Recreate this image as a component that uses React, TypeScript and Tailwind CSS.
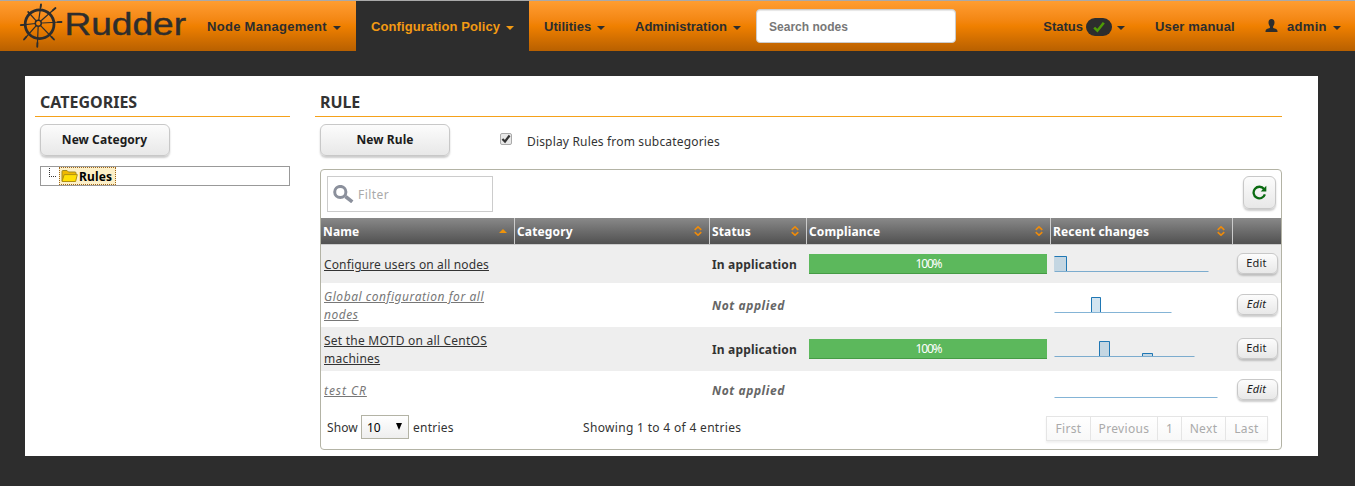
import type { ReactNode } from "react";

const SANS = "font-['Noto_Sans',sans-serif]";
const COLS = "grid grid-cols-[194px_195px_97px_244px_182px_48px]";
const BUTTON =
  "flex items-center justify-center rounded-[6px] border border-[#c8c8c8] bg-linear-to-b from-[#fcfcfc] to-[#e8e8e8] text-[#1c1c1c] shadow-[0_2px_2px_rgba(0,0,0,0.2)]";

type Rule = { name: string; spacing: string; applied: boolean; line: string; area: string; tall: boolean };

const RULES: Rule[] = [
  { name: "Configure users on all nodes", spacing: "tracking-[0.14px]", applied: true, tall: false, line: "M0.5 .5H12.5V15", area: "M0 0H13V15H0Z" },
  { name: "Global configuration for all nodes", spacing: "tracking-[0.55px]", applied: false, tall: true, line: "M37.5 15V.5H46.5V15", area: "M37 0H47V15H37Z" },
  { name: "Set the MOTD on all CentOS machines", spacing: "tracking-[0.24px]", applied: true, tall: true, line: "M45.5 15V.5H55.5V15M88.5 15V12.5H98.5V15", area: "M45 0H56V15H45ZM88 12H99V15H88Z" },
  { name: "test CR", spacing: "tracking-[0.95px]", applied: false, tall: false, line: "", area: "" },
];
const BASELINES = [155, 118, 141, 164];

function Wheel() {
  const handles = [[41, 3.5], [55.5, 7], [61.5, 21], [54, 38.5], [37.3, 45.8], [24, 38.5], [20.8, 24.2], [28.2, 11]];
  return (
    <svg width="64" height="50" viewBox="0 0 64 50" fill="none" stroke="#2d2d2d" className="shrink-0">
      <circle cx="39.6" cy="23.2" r="14.4" strokeWidth="2.8" />
      <circle cx="38.3" cy="22.2" r="3" strokeWidth="1.5" />
      {handles.map(([x, y]) => {
        const dx = x - 38.3;
        const dy = y - 22.2;
        return (
          <g key={`${x}-${y}`}>
            <path d={`M${38.3 + dx * 0.16} ${22.2 + dy * 0.16}L${x} ${y}`} strokeWidth="1.2" />
            <path d={`M${38.3 + dx * 0.84} ${22.2 + dy * 0.84}L${x} ${y}`} strokeWidth="1.8" strokeLinecap="round" />
          </g>
        );
      })}
    </svg>
  );
}

function Caret() {
  return <span className="mt-px h-0 w-0 border-x-4 border-t-4 border-x-transparent border-t-current" />;
}

function NavItem({ children, className }: { children: ReactNode; className: string }) {
  return <div className={`flex h-[50px] items-center pt-[2px] whitespace-nowrap ${className}`}>{children}</div>;
}

function Header() {
  return (
    <header className="flex h-[51px] items-center border-t border-[#a9a9a9] bg-linear-to-b from-[#ff9d30] via-[#f08000] to-[#b86000] font-['Liberation_Sans',sans-serif] text-[13px] font-bold text-[#2d2d2d]">
      <Wheel />
      <svg width="128" height="50" viewBox="0 0 128 50" className="shrink-0">
        <text x="0.5" y="34.3" fontSize="31" fontWeight="400" textLength="121.5" lengthAdjust="spacingAndGlyphs" fill="#2d2d2d" stroke="#2d2d2d" strokeWidth=".4">Rudder</text>
      </svg>
      <NavItem className="w-[164px] gap-[6px] pl-[15px] tracking-[0.29px]">Node Management<Caret /></NavItem>
      <NavItem className="w-[173px] gap-[6px] bg-[#2d2d2d] pl-[15px] tracking-[0.1px] text-[#f39a13]">Configuration Policy<Caret /></NavItem>
      <NavItem className="w-[91px] gap-[6px] pl-[15px] tracking-[0.03px]">Utilities<Caret /></NavItem>
      <NavItem className="w-[136px] gap-[6px] pl-[15px] tracking-[0.02px]">Administration<Caret /></NavItem>
      <input placeholder="Search nodes" className="mb-px h-[34px] w-[200px] shrink-0 rounded-[4px] border border-[#ccc] bg-white px-3 pt-[2px] text-[12px] tracking-[0.02px] shadow-[inset_0_1px_1px_rgba(0,0,0,0.1)] placeholder:text-[#777]" />
      <NavItem className="w-[169px] justify-end">
        <span>Status</span>
        <span className="mr-[5px] mb-px ml-[3px] flex h-[18px] w-[26px] items-center justify-center rounded-[9px] bg-[#2d2d2d]">
          <svg width="12" height="12" viewBox="0 0 12 12"><path d="M1.2 6.6L4.4 9.7L10.8 1.8" fill="none" stroke="#4e9a06" strokeWidth="2.6" /></svg>
        </span>
        <Caret />
      </NavItem>
      <NavItem className="ml-[30px] w-[110px] tracking-[0.16px]">User manual</NavItem>
      <NavItem className="">
        <svg width="13" height="13" viewBox="0 0 12 13" className="-mt-[3px]"><path d="M6 0C8 0 9 1.4 9 3.5C9 5.5 8.2 6.4 7.6 7.4V9C10 9.8 12 10.2 12 12V13H0V12C0 10.2 2 9.8 4.4 9V7.4C3.8 6.4 3 5.5 3 3.5C3 1.4 4 0 6 0Z" fill="#2d2d2d" /></svg>
        <span className="mr-[6px] ml-[9px] tracking-[0.3px]">admin</span>
        <Caret />
      </NavItem>
    </header>
  );
}

function Sort({ active }: { active?: boolean }) {
  return (
    <svg width="8" height="10" viewBox="0 0 8 10" className="mt-[-2px] mr-[7px]">
      {active ? <path d="M0 7H8L4 3Z" fill="#ee930b" /> : <path d="M.7 3.8L4 .8L7.3 3.8M.7 6.2L4 9.2L7.3 6.2" fill="none" stroke="#ee8b0b" strokeWidth="1.6" />}
    </svg>
  );
}

function Folder() {
  return (
    <svg width="17" height="14" viewBox="0 0 17 14">
      <path d="M1 12V2.5Q1 1.5 2 1.5H6L7.5 3H14Q15 3 15 4V6" fill="#f0b800" stroke="#a08a20" />
      <path d="M1 12.5L3.2 5.6H16.3L14.6 12.5Z" fill="#ffdf05" stroke="#b09010" />
    </svg>
  );
}

function Sidebar() {
  return (
    <aside className="w-[255px]">
      <h2 className="h-[41px] border-b border-[#f5a11a] pt-[14px] pl-[5px] text-[16px] leading-6 font-bold text-[#333]">CATEGORIES</h2>
      <div className="pl-[5px]">
        <button className={`${BUTTON} mt-[7px] h-[32px] w-[130px] pr-px text-[12px] font-bold tracking-[0.06px]`}>New Category</button>
        <div className="mt-[10px] flex h-[20px] border border-[#999] pl-[8px]">
          <span className="mt-px h-[9px] w-[7px] border-b border-l border-dotted border-[#333]" />
          <span className="ml-[3px] flex h-[18px] w-[57px] items-center gap-[1px] border border-dotted border-[#a0661a] bg-[#fdf0c8] pl-px text-[12px] font-bold whitespace-nowrap text-black"><Folder /><span className="pt-[2px] tracking-[0.15px]">Rules</span></span>
        </div>
      </div>
    </aside>
  );
}

const HEADINGS = ["Name", "Category", "Status", "Compliance", "Recent changes", ""];
const PAGES: [string, string][] = [["First", "w-[44px]"], ["Previous", "w-[67px]"], ["1", "w-[24px]"], ["Next", "w-[44px]"], ["Last", "w-[42px]"]];

function RuleTable() {
  return (
    <div className="mt-[13px] ml-[5px] h-[281px] w-[962px] rounded-[4px] border border-[#b3b3a5] text-[12px] text-[#333]">
      <div className="flex h-[48px] items-start justify-between pt-[6px] pr-[5px] pl-[6px]">
        <div className="flex h-[36px] w-[166px] items-center border border-[#ccc] pl-[5px]">
          <svg width="21" height="18" viewBox="0 0 21 18" fill="none" stroke="#8b909c"><circle cx="7.3" cy="7" r="5.6" strokeWidth="3" /><path d="M12.5 11.5L19.3 16.8" strokeWidth="3.6" /></svg>
          <span className="mt-[2px] ml-[4px] text-[12px] tracking-[0.45px] text-[#aaa]">Filter</span>
        </div>
        <button className={`${BUTTON} h-[33px] w-[33px]`} aria-label="Refresh">
          <svg width="15" height="15" viewBox="0 0 15 15" className="-mt-px"><path d="M12.9 9.4A5.8 5.8 0 1 1 12 4" fill="none" stroke="#0b6b12" strokeWidth="2.3" /><path d="M14.3 .8V6.6H8.7Z" fill="#0b6b12" /></svg>
        </button>
      </div>
      <div className={`${COLS} h-[27px] border-b border-[#ccc] bg-linear-to-b from-[#898989] to-[#515151] font-bold text-white`}>
        {HEADINGS.map((h, i) => (
          <div key={i} className={`flex items-center justify-between pt-[2px] pl-[2px] tracking-[0.14px] whitespace-nowrap ${i < 5 ? "border-r border-[#ccc]" : ""}`}>
            {h}{h && <Sort active={i === 0} />}
          </div>
        ))}
      </div>
      {RULES.map((r, i) => (
        <div key={r.name} className={`${COLS} ${r.tall ? "h-[44px]" : "h-[38px]"} ${r.applied ? "bg-[#eee]" : "text-[#777] italic"} items-center`}>
          <div className={`pt-[2px] pr-4 pl-[3px] leading-[18px] underline underline-offset-1 ${r.spacing}`}>{r.name}</div>
          <div />
          <div className={`pt-[2px] pl-[2px] font-bold whitespace-nowrap ${r.applied ? "tracking-[0.17px]" : "tracking-[0.58px] text-[#666]"}`}>{r.applied ? "In application" : "Not applied"}</div>
          <div className="pl-[2px]">
            {r.applied && <div className="flex h-[20px] w-[238px] items-center justify-center border-b border-[#459b45] bg-[#5cb85c] pt-px pl-px text-[12px] tracking-[-1.2px] text-white">100%</div>}
          </div>
          <svg width="166" height="16" viewBox="0 0 166 16" fill="none" className="ml-[3px]">
            <path d={r.area} fill="#1f77b4" fillOpacity=".2" />
            <path d={`M.5 15.5H${BASELINES[i] - 0.5}`} stroke="#1f77b4" strokeOpacity=".55" />
            <path d={r.line} stroke="#1f77b4" />
          </svg>
          <button className={`${BUTTON} -mt-px ml-[4px] h-[21px] w-[41px] pr-[2px] text-[11px] tracking-[0.2px] ${r.applied ? "" : "italic"}`}>Edit</button>
        </div>
      ))}
      <div className="flex h-[36px] items-center pl-[6px]">
        <span className="w-[34px] pt-[2px] tracking-[0.1px]">Show</span>
        <span className="flex h-[24px] w-[48px] items-center justify-between border border-[#b3b3a5] bg-linear-to-b from-white to-[#eee] pr-[5px] pl-[5px] text-black"><span className="pt-[2px]">10</span><svg width="8" height="8" viewBox="0 0 8 8"><path d="M1 0H7L4 7Z" /></svg></span>
        <span className="ml-[4px] w-[170px] pt-[2px] tracking-[0.25px]">entries</span>
        <span className="w-[463px] pt-[2px] tracking-[0.32px]">Showing 1 to 4 of 4 entries</span>
        <div className="mt-[3px] flex h-[25px] border-l border-[#e5e5e5] text-[#aaa] shadow-[0_2px_2px_rgba(0,0,0,0.06)]">
          {PAGES.map(([p, w]) => <span key={p} className={`${w} flex items-center justify-center border-y border-r border-[#e5e5e5] bg-linear-to-b from-white to-[#f8f8f8] pt-px tracking-[0.35px]`}>{p}</span>)}
        </div>
      </div>
    </div>
  );
}

export default function App() {
  return (
    <div className={`h-[486px] w-[1355px] overflow-hidden bg-[#2d2d2d] ${SANS}`}>
      <Header />
      <main className="mt-[25px] ml-[25px] flex h-[380px] w-[1293px] gap-[25px] bg-white pl-[10px]">
        <Sidebar />
        <section className="w-[967px]">
          <h2 className="h-[41px] border-b border-[#f5a11a] pt-[14px] pl-[5px] text-[16px] leading-6 font-bold tracking-[-0.1px] text-[#333]">RULE</h2>
          <div className="mt-[7px] flex h-[32px] items-center pl-[5px]">
            <button className={`${BUTTON} h-[32px] w-[130px] text-[12px] font-bold tracking-[0.08px]`}>New Rule</button>
            <span className="mb-[2px] ml-[50px] flex h-[12px] w-[12px] items-center justify-center rounded-[2px] border border-[#aaa] bg-[#e8e8e8]">
              <svg width="10" height="10" viewBox="0 0 10 10" className="shrink-0"><path d="M1.4 5L4 7.5L8.6 1.5" fill="none" stroke="#333" strokeWidth="2.2" /></svg>
            </span>
            <span className="mt-[3px] ml-[15px] text-[12px] tracking-[0.17px] text-[#333]">Display Rules from subcategories</span>
          </div>
          <RuleTable />
        </section>
      </main>
    </div>
  );
}
